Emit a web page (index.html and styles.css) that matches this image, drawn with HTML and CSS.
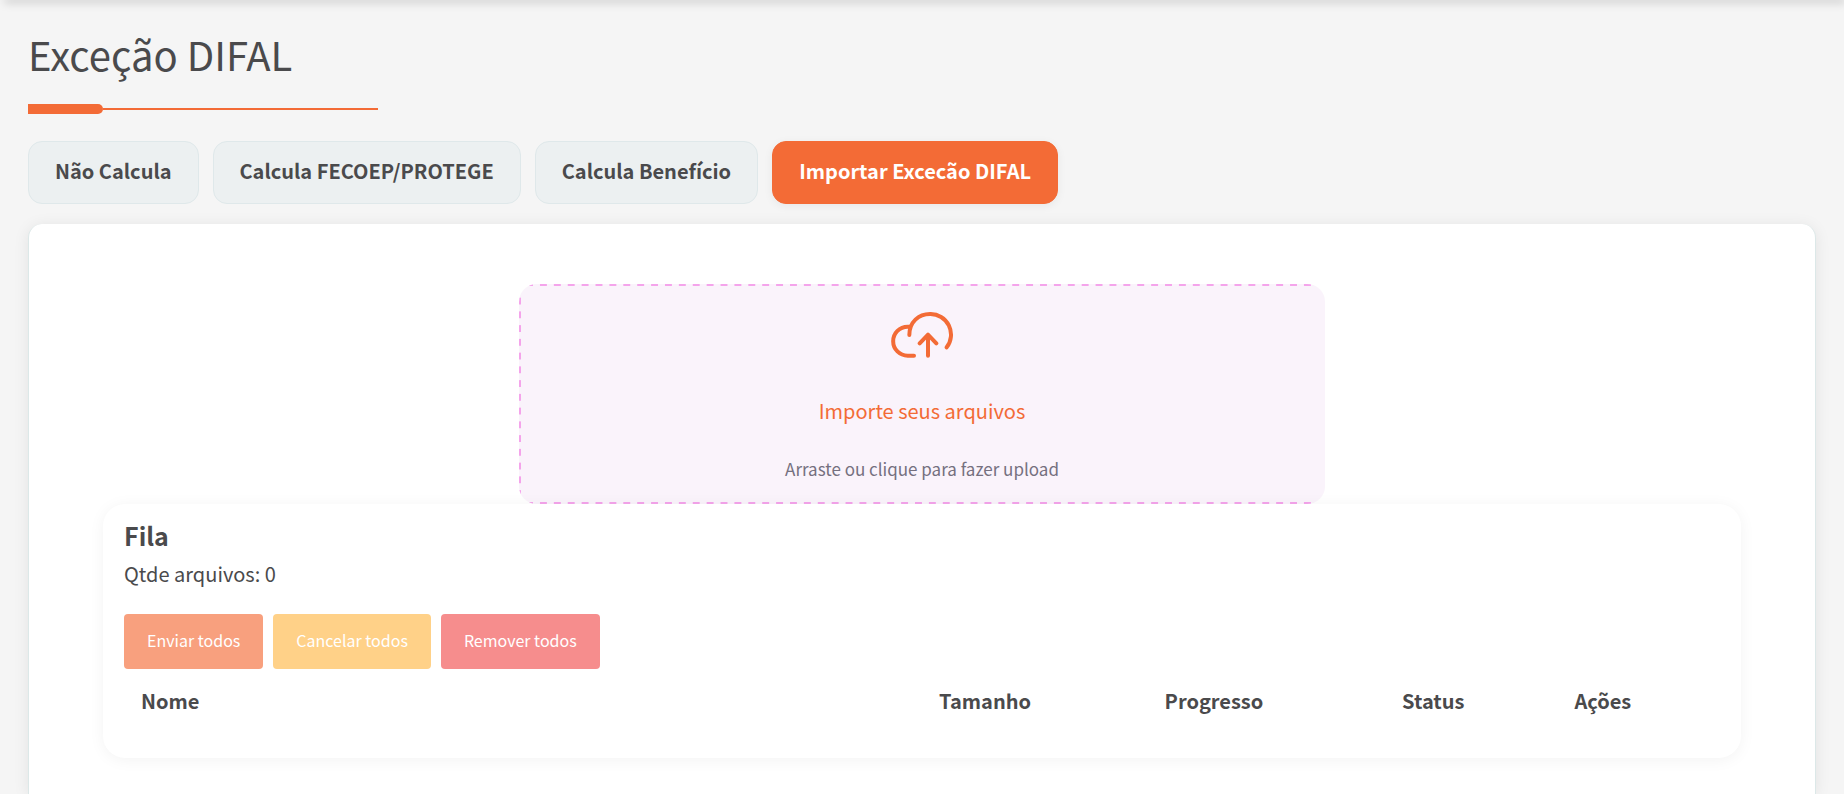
FILE: index.html
```html
<!DOCTYPE html>
<html lang="pt-BR">
<head>
<meta charset="utf-8">
<meta name="viewport" content="width=device-width, initial-scale=1">
<title>Exceção DIFAL</title>
<link rel="stylesheet" href="styles.css">
</head>
<body>
<div class="topbar"></div>
<main class="page">
  <h1 class="title">Exceção DIFAL</h1>
  <div class="divider"></div>
  <nav class="tabs">
    <button type="button" class="tab">Não Calcula</button>
    <button type="button" class="tab">Calcula FECOEP/PROTEGE</button>
    <button type="button" class="tab">Calcula Benefício</button>
    <button type="button" class="tab tab-active">Importar Excecão DIFAL</button>
  </nav>
  <section class="card">
    <button type="button" class="dropzone">
      <svg class="cloud" viewBox="90 66 192 138" aria-hidden="true">
        <path d="M148 135C148 96 176 72 210 72A62 62 0 0 1 260 172M148 110H143A43 43 0 0 0 143 197H162M204 197V135M179 160L204 134L229 160"/>
      </svg>
      <span class="drop-title">Importe seus arquivos</span>
      <span class="drop-hint">Arraste ou clique para fazer upload</span>
    </button>
    <section class="queue">
      <h2 class="queue-title">Fila</h2>
      <p class="queue-count">Qtde arquivos: 0</p>
      <div class="actions">
        <button type="button" class="btn btn-send">Enviar todos</button>
        <button type="button" class="btn btn-cancel">Cancelar todos</button>
        <button type="button" class="btn btn-remove">Remover todos</button>
      </div>
      <table class="files">
        <thead>
          <tr>
            <th class="col-name" scope="col">Nome</th>
            <th scope="col">Tamanho</th>
            <th scope="col">Progresso</th>
            <th scope="col">Status</th>
            <th scope="col">Ações</th>
          </tr>
        </thead>
      </table>
    </section>
  </section>
</main>
</body>
</html>
```
FILE: styles.css
```css
* { box-sizing: border-box; }

body {
  margin: 0;
  background: #f5f5f5;
  color: #4a4a4c;
  font-family: "Noto Sans CJK SC", "Open Sans", sans-serif;
  font-size: 20px;
  line-height: 30px;
}

button { font: inherit; color: inherit; cursor: pointer; }

.topbar {
  height: 0;
  margin-left: 6px;
  box-shadow: 0 0 10px 2px rgba(0, 0, 0, 0.25);
}

.page {
  display: flex;
  flex-direction: column;
  min-height: 100vh;
  padding: 30px 28px 0;
}

.title {
  margin: 0;
  font-size: 40px;
  font-weight: 400;
  line-height: 48px;
}

.divider {
  display: flex;
  align-items: center;
  width: 350px;
  height: 10px;
  margin: 26px 0 27px;
}
.divider::before {
  content: "";
  width: 75px;
  height: 10px;
  border-radius: 0 5px 5px 0;
  background: #f36b36;
}
.divider::after {
  content: "";
  flex: 1;
  height: 2px;
  background: #f36b36;
}

.tabs {
  display: flex;
  flex-wrap: wrap;
  gap: 14px;
  margin-bottom: 20px;
}
.tab {
  padding: 14px 26px 17px;
  border: 1px solid #dfe8ea;
  border-radius: 14px;
  background: #ecf0f1;
  font-weight: 700;
}
.tab-active {
  border-color: #f36b36;
  background: #f36b36;
  color: #fff;
  box-shadow: 0 2px 10px rgba(0, 0, 0, 0.06);
}

.card {
  flex: 1;
  display: flex;
  flex-direction: column;
  align-items: center;
  padding: 60px 74px 36px;
  border: 1px solid #dce8e8;
  border-width: 0 1px;
  border-radius: 14px 14px 0 0;
  background: #fff;
  box-shadow: 0 2px 16px rgba(0, 0, 0, 0.08);
}

/* Wide dashes on the top, bottom and left edges; the right edge stays open. */
.dropzone {
  display: flex;
  flex-direction: column;
  align-items: center;
  width: 806px;
  max-width: 100%;
  padding: 28px 22px 20px;
  border: 0;
  border-radius: 18px;
  background:
    linear-gradient(90deg, #f4a4eb 50%, transparent 50%) top / 14px 2px round no-repeat,
    linear-gradient(90deg, #f4a4eb 50%, transparent 50%) bottom / 14px 2px round no-repeat,
    linear-gradient(180deg, transparent 50%, #f4a4eb 50%) left / 2px 14px no-repeat round,
    #faf3fb;
}
.cloud {
  width: 64px;
  height: 46px;
  margin-bottom: 38px;
  fill: none;
  stroke: #f36b36;
  stroke-width: 12;
  stroke-linecap: round;
  stroke-linejoin: round;
}
.drop-title {
  margin-bottom: 28px;
  color: #f36b36;
}
.drop-hint {
  color: #75707f;
  font-size: 17px;
}

.queue {
  align-self: stretch;
  padding: 16px 21px 25px;
  border-radius: 22px;
  background: #fff;
  box-shadow: 0 2px 16px rgba(0, 0, 0, 0.05);
}
.queue-title {
  margin: 0 0 9px;
  font-size: 25px;
  font-weight: 700;
}
.queue-count { margin: 0; }

.actions {
  display: flex;
  flex-wrap: wrap;
  gap: 10px;
  margin-top: 25px;
}
.btn {
  padding: 11px 23px 14px;
  border: 0;
  border-radius: 4px;
  color: #fff;
  font-size: 16px;
}
.btn-send { background: #f8a07e; }
.btn-cancel { background: #ffd188; }
.btn-remove { background: #f68d8d; }

.files {
  width: 100%;
  border-collapse: collapse;
  text-align: left;
}
.files th { padding: 17px; font-weight: 700; }
.files .col-name { width: 50%; }
```
